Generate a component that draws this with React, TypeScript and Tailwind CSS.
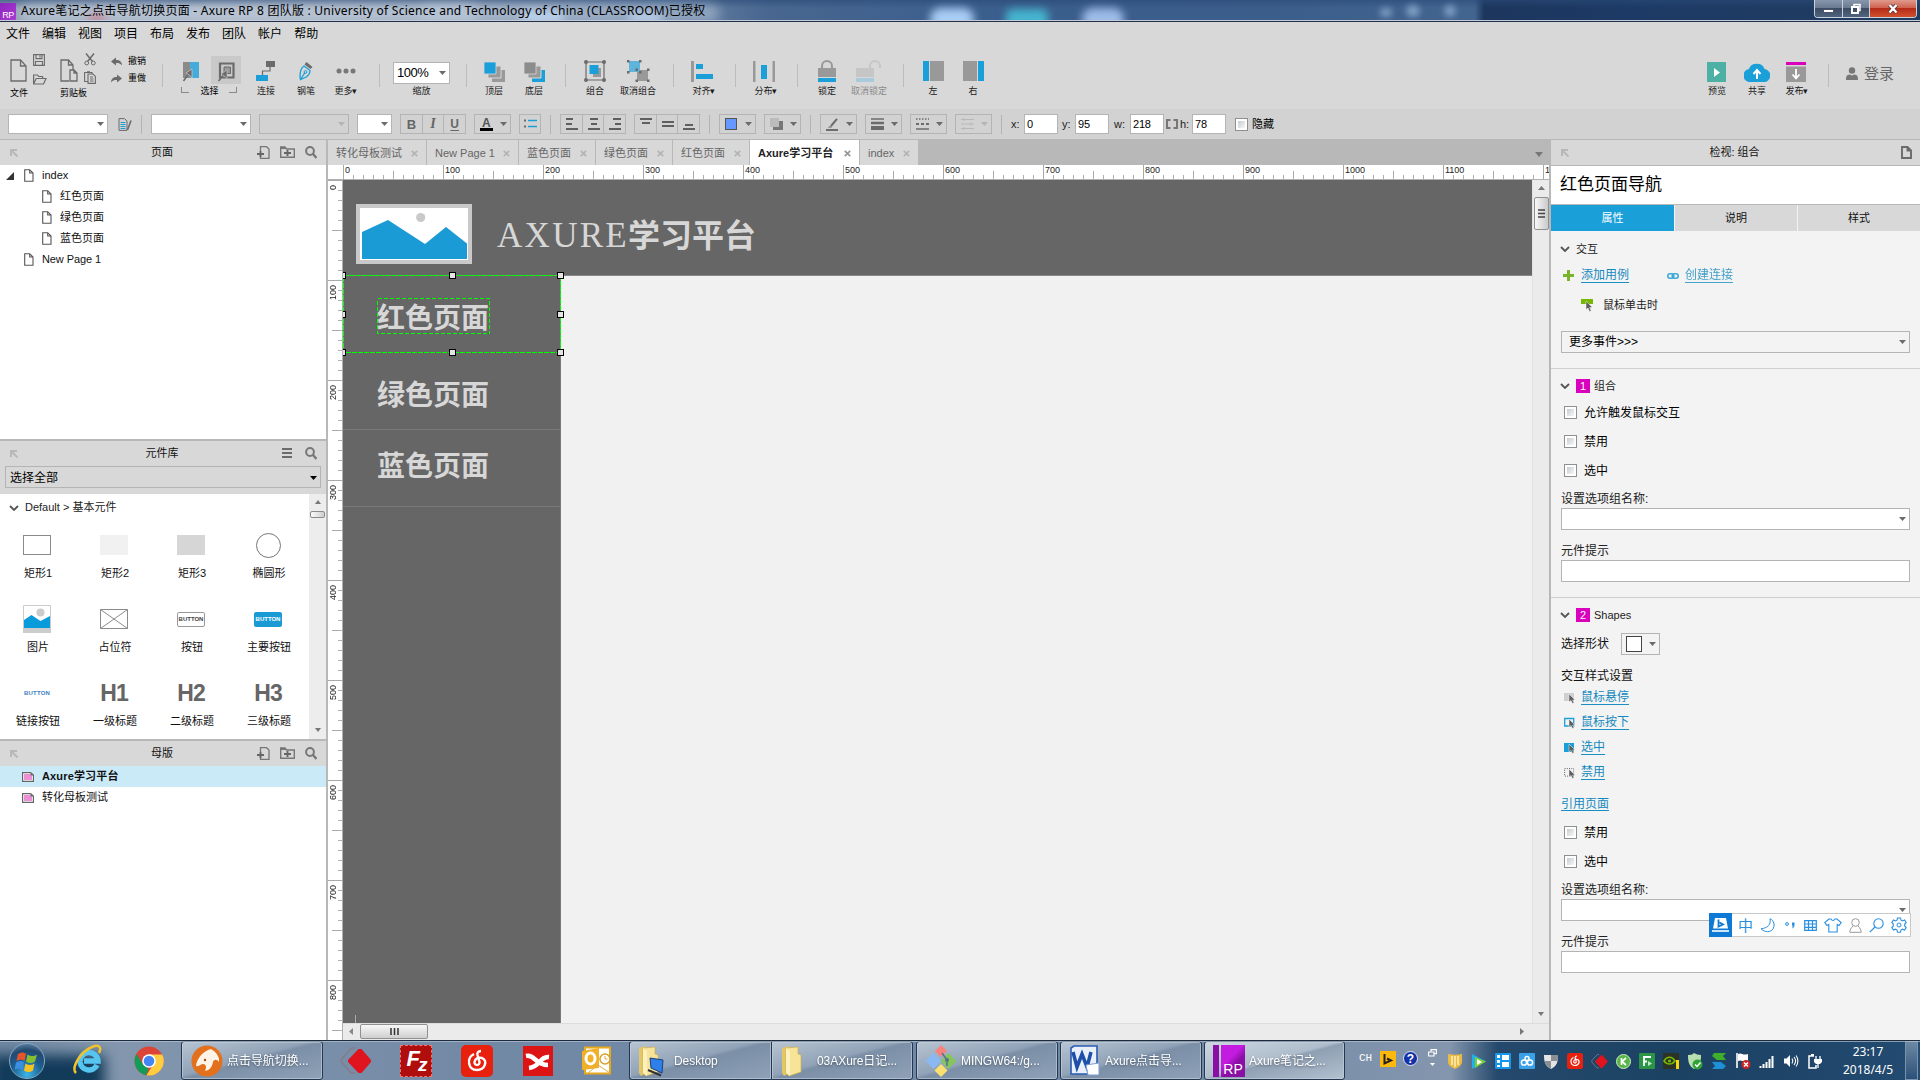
import React from "react";
import type { ReactNode } from "react";

type P = { children?: ReactNode; className?: string };

const G = "#6b6b6b";
const BLUE = "#1a9fd9";

function Svg({ w, h, children, className = "" }: { w: number; h: number; children: ReactNode; className?: string }) {
  return (
    <svg width={w} height={h} viewBox={`0 0 ${w} ${h}`} fill="none" className={`block shrink-0 ${className}`}>
      {children}
    </svg>
  );
}

const Caret = ({ c = "#6b6b6b" }: { c?: string }) => (
  <Svg w={7} h={4}><path d="M0 0h7L3.500 4z" fill={c} /></Svg>
);

/* ---------- window title ---------- */
function TitleBar() {
  return (
    <div className="relative flex h-[22px] items-center overflow-hidden border-b border-[#1f3048] bg-[linear-gradient(90deg,#8d9db2_0%,#9eacbf_12%,#8c9db5_25%,#6e87a8_34%,#48668f_40%,#3a5e8d_52%,#3b5d8a_66%,#42658f_76.8%,#1c365d_77.3%,#1d3a66_85%,#203c5f_100%)]">
      <div className="absolute inset-x-0 top-0 h-[8px] bg-[linear-gradient(180deg,#2a4a7799,#2a4a7700)]" />
      <div className="absolute left-[18px] top-[5px] h-[17px] w-[460px] rounded-full bg-[#cfd8e4]/60 blur-[6px]" />
      <div className="absolute left-[420px] top-[5px] h-[17px] w-[300px] rounded-full bg-[#b9c8da]/60 blur-[6px]" />
      <div className="absolute left-[88px] top-[14px] h-[10px] w-[18px] rounded-full bg-[#d26a7c]/60 blur-[4px]" />
      <div className="absolute left-[520px] top-[11px] h-[12px] w-[44px] rounded-full bg-[#c4dcf7]/80 blur-[4px]" />
      <div className="absolute left-[628px] top-[12px] h-[12px] w-[34px] rounded-full bg-[#c4dcf7]/70 blur-[4px]" />
      <div className="absolute left-[930px] top-[8px] h-[22px] w-[44px] rounded-full bg-[#a9cdf5] blur-[4px]" />
      <div className="absolute left-[1006px] top-[9px] h-[20px] w-[42px] rounded-md bg-[#45b5cf] blur-[4px]" />
      <div className="absolute left-[1082px] top-[8px] h-[22px] w-[42px] rounded-full bg-[#9dbce8] blur-[4px]" />
      <div className="absolute left-[1380px] top-[8px] h-[9px] w-[12px] rounded-full bg-[#7b9dc2] blur-[3px]" />
      <div className="absolute left-[1406px] top-[5px] h-[12px] w-[14px] rounded-full bg-[#7b9dc2] blur-[3px]" />
      <div className="absolute left-[1444px] top-[5px] h-[12px] w-[12px] rounded-full bg-[#7b9dc2] blur-[3px]" />
      <div className="absolute inset-x-0 bottom-0 h-px bg-[#c3ccd8]" />
      <div className="relative mt-[2px] flex h-[17px] w-4 items-end justify-center bg-[linear-gradient(135deg,#8e24c0,#a83bd0)] text-[9px] leading-[10px] tracking-[-0.5px] text-white">RP</div>
      <div className="relative ml-[5px] whitespace-nowrap font-['Noto_Sans','Noto_Sans_CJK_SC',sans-serif] text-[12px] leading-[20px] tracking-[0.25px] text-black">
        Axure笔记之点击导航切换页面 - Axure RP 8 团队版 : University of Science and Technology of China (CLASSROOM)已授权
      </div>
      <div className="relative ml-auto mr-[3px] flex h-[18px] w-[103px] self-start overflow-hidden rounded-b-[4px] border border-t-0 border-[#c9d2de]">
        <div className="flex w-[28px] items-center justify-center border-r border-[#c9d2de] bg-[linear-gradient(180deg,#8796ab_0%,#69798f_48%,#3c4c64_50%,#51647e_100%)] pt-[4px]">
          <div className="h-[4px] w-[11px] border border-[#4b5565] bg-white" />
        </div>
        <div className="flex w-[27px] items-center justify-center border-r border-[#c9d2de] bg-[linear-gradient(180deg,#8796ab_0%,#69798f_48%,#3c4c64_50%,#51647e_100%)]">
          <Svg w={12} h={12}><path d="M4 3.500V1.500h6v6H8.500" stroke="#fff" strokeWidth="1.500" /><rect x="2" y="4" width="6" height="6" stroke="#fff" strokeWidth="2" /></Svg>
        </div>
        <div className="flex flex-1 items-center justify-center bg-[linear-gradient(180deg,#e09a8c_0%,#cf6350_45%,#b52c18_50%,#d2502e_100%)]">
          <Svg w={12} h={11}><path d="M2.500 2l7 7.500M9.500 2l-7 7.500" stroke="#5a3430" strokeWidth="4" /><path d="M2.500 2l7 7.500M9.500 2l-7 7.500" stroke="#fff" strokeWidth="2.400" /></Svg>
        </div>
      </div>
    </div>
  );
}

function MenuBar() {
  return (
    <div className="flex h-[24px] items-center gap-[12px] bg-[#d8d8d8] pl-[6px] text-[12px] leading-none text-black">
      {["文件", "编辑", "视图", "项目", "布局", "发布", "团队", "帐户", "帮助"].map((m) => <span key={m}>{m}</span>)}
    </div>
  );
}

/* ---------- main toolbar ---------- */
const Tool = ({ icon, label, className = "", dim }: { icon: ReactNode; label: string; className?: string; dim?: boolean }) => (
  <div className={`flex h-[58px] shrink-0 flex-col items-center ${className}`}>
    <div className="mt-[7px] flex h-[28px] items-center justify-center">{icon}</div>
    <div className={`mt-[2px] flex items-center whitespace-nowrap text-[9px] leading-[9px] ${dim ? "text-[#8a8a8a]" : "text-[#1a1a1a]"}`}>{label}</div>
  </div>
);
const Sep = ({ className = "" }: P) => <div className={`mt-[14px] h-[23px] w-px shrink-0 bg-[#bcbcbc] ${className}`} />;

const Page = ({ w = 17, h = 23, c = "#6b6b6b" }: { w?: number; h?: number; c?: string }) => (
  <svg width={w} height={h} viewBox="0 0 17 23" fill="none" className="block shrink-0"><path d="M1 1h9.500L16 7v15H1zM10.500 1v6H16" stroke={c} strokeWidth="1.300" /></svg>
);

function Toolbar() {
  return (
    <div className="flex h-[63px] bg-[#d8d8d8] pt-[4px]">
      <div className="ml-[10px] flex h-[58px] w-[42px] flex-col">
        <div className="flex h-[36px] gap-[6px]">
          <div className="mt-[9px]"><Page /></div>
          <div className="mt-[4px] flex flex-col gap-[8px]">
            <Svg w={12} h={12}><path d="M.6.6h10.800v10.800H.6zM3 .6v4h6v-4M2.500 11V7.500h7V11M7 1.500v2" stroke={G} strokeWidth="1.100" /></Svg>
            <Svg w={14} h={11}><path d="M.6 10V1h4l1 1.500h4V4.500M.6 10l2.600-5.500H13L10.500 10z" stroke={G} strokeWidth="1.200" /></Svg>
          </div>
        </div>
        <div className="mt-[2px] flex-none pt-[1px] text-[9px] leading-[9px]">文件</div>
      </div>
      <div className="ml-[8px] flex h-[58px] w-[42px] flex-col">
        <div className="flex h-[36px] gap-[6px]">
          <div className="mt-[9px]"><Svg w={18} h={23}><path d="M9 22H1V1h7.500L13 6v5M8.500 1v5H13M10 11h4l3 3v8h-7zM14 11v3h3" stroke={G} strokeWidth="1.300" /></Svg></div>
          <div className="mt-[3px] flex flex-col gap-[5px]">
            <Svg w={12} h={13}><path d="M2 .5l6.500 8M10 .5L3.500 8.500" stroke={G} strokeWidth="1.500" /><circle cx="2.700" cy="10" r="1.900" stroke={G} /><circle cx="9.300" cy="10" r="1.900" stroke={G} /></Svg>
            <Svg w={12} h={13}><path d="M4 10.500H.6V1.500H8V3M3 .7h3M4 3h5l2.400 2.400v7H4zM6 6h3M6 8h3.500M6 10h3.500" stroke={G} strokeWidth="1.100" /></Svg>
          </div>
        </div>
        <div className="mt-[2px] flex-none pt-[1px] text-[9px] leading-[9px]">剪贴板</div>
      </div>
      <div className="ml-[9px] mt-[7px] flex h-[31px] w-[37px] flex-col justify-between text-[9px] leading-[9px]">
        <div className="flex h-[9px] items-center gap-[6px]"><Svg w={11} h={9}><path d="M0 4.500L5 .5V3c4 0 6 2 6 5.500C9.500 6.500 8 6 5 6v2.500z" fill={G} /></Svg>撤销</div>
        <div className="mb-[5px] flex h-[9px] items-center gap-[6px]"><Svg w={11} h={9}><path d="M11 4.500L6 .5V3C2 3 0 5 0 8.500 1.500 6.500 3 6 6 6v2.500z" fill={G} /></Svg>重做</div>
      </div>
      <Sep className="ml-[14px]" />
      <div className="ml-[18px] flex h-[58px] w-[60px] flex-col">
        <div className="mt-[6px] flex h-[28px] items-center justify-between">
          <Svg w={18} h={20} className="ml-[1px] mt-[4px]"><path d="M1 0h7v16H1z" fill="#8a8a8a" /><path d="M8 0h9v16H8z" fill="#46abd8" /><path d="M1.500 19l5-7" stroke={G} strokeWidth="1.500" /><path d="M10 7v9L8 13.500 4 11z" fill={G} stroke="#d8d8d8" strokeWidth=".6" /></Svg>
          <div className="flex h-[28px] w-[30px] items-center justify-center bg-[#c9c9c9] pt-[4px]">
            <Svg w={19} h={20}><path d="M3 1.500h13.500v14H3z" stroke={G} strokeWidth="2.200" /><path d="M7 5h6.500v6.500H7z" fill="#999" stroke={G} strokeWidth="1" /><path d="M1.500 19l5-6" stroke={G} strokeWidth="1.600" /><path d="M10 8v9L8 14.500 4 12z" fill={G} stroke="#c9c9c9" strokeWidth=".6" /></Svg>
          </div>
        </div>
        <div className="flex h-[12px] items-end justify-between pr-[4px] text-[9px] leading-[9px]">
          <div className="mb-[3px] h-[6px] w-[8px] border-b border-l border-[#8a8a8a]" />
          <span className="-mr-[1px]">选择</span>
          <div className="mb-[3px] h-[6px] w-[8px] border-b border-r border-[#8a8a8a]" />
        </div>
      </div>
      <Tool className="ml-[12px] w-[26px]" label="连接" icon={<Svg w={20} h={20}><path d="M10 0h9v6h-9zM0 14h12v6H0z" fill={G} /><path d="M0 14h12v6H0z" fill={BLUE} /><path d="M14 6v4H6.500v4" stroke={G} strokeWidth="1.200" /></Svg>} />
      <Tool className="ml-[14px] w-[26px]" label="钢笔" icon={<Svg w={15} h={20}><path d="M7.500 1l6 5-2 2-6-4.500z" fill={G} /><path d="M5 5l6 4.500c0 4-2 6-6 7.500L1.500 18.500 1 16C1 11 1.500 7 5 5zM1.500 18.500l4.500-7" stroke={BLUE} strokeWidth="1.300" /><circle cx="6.500" cy="11" r="1.400" stroke={BLUE} /></Svg>} />
      <Tool className="ml-[13px] w-[28px]" label="更多▾" icon={<Svg w={20} h={6}><circle cx="3" cy="3" r="2.500" fill="#777" /><circle cx="10" cy="3" r="2.500" fill="#777" /><circle cx="17" cy="3" r="2.500" fill="#777" /></Svg>} />
      <Sep className="ml-[19px]" />
      <Tool className="ml-[13px] w-[57px]" label="缩放" icon={
        <div className="mt-[3px] flex h-[22px] w-[57px] items-center justify-between border border-[#b4b4b4] bg-white px-[3px] text-[13px] leading-none tracking-[-0.5px]">100%<Caret /></div>
      } />
      <Sep className="ml-[16px]" />
      <Tool className="ml-[13px] w-[28px]" label="顶层" icon={<Svg w={21} h={20} className="mt-px"><path d="M8 8h13v12H8z" fill="#999" /><path d="M4 4h13v12H4z" fill="#999" stroke="#d8d8d8" /><path d="M0 0h12v12H0z" fill={BLUE} stroke="#d8d8d8" strokeWidth=".8" /></Svg>} />
      <Tool className="ml-[12px] w-[28px]" label="底层" icon={<Svg w={21} h={20} className="mt-px"><path d="M8 8h13v12H8z" fill={BLUE} /><path d="M4 4h13v12H4z" fill="#999" stroke="#d8d8d8" /><path d="M0 0h12v12H0z" fill="#8c8c8c" stroke="#d8d8d8" strokeWidth=".8" /></Svg>} />
      <Sep className="ml-[17px]" />
      <Tool className="ml-[15px] w-[28px]" label="组合" icon={<Svg w={22} h={22}><path d="M2 2h18v18H2z" stroke={G} strokeWidth="1.200" /><path d="M9 8h8v9H9z" fill="#999" /><path d="M5.500 5h9v9h-9z" fill={BLUE} /><g fill={G}><circle cx="2" cy="2" r="2" /><circle cx="20" cy="2" r="2" /><circle cx="2" cy="20" r="2" /><circle cx="20" cy="20" r="2" /></g></Svg>} />
      <Tool className="ml-[10px] w-[38px]" label="取消组合" icon={<Svg w={23} h={22}><path d="M10 10h11v11H10z" fill="#999" /><path d="M2 1h11v11H2z" fill="#5fb4db" /><g fill={G}><path d="M0 0h2.500v2.500H0zM12 0h2.500v2.500H12zM0 11h2.500v2.500H0zM12 11h2.500v2.500H12zM8.500 8.500H11V11H8.500zM20 8.500h2.500V11H20zM8.500 19.500H11V22H8.500zM20 19.500h2.500V22H20z" /></g></Svg>} />
      <Sep className="ml-[16px]" />
      <Tool className="ml-[16px] w-[28px]" label="对齐▾" icon={<Svg w={22} h={21} className="-ml-[5px]"><path d="M0 0h3v21H0z" fill="#999" /><path d="M5 3h7v5H5zM5 13h17v5H5z" fill={BLUE} /></Svg>} />
      <Sep className="ml-[17px]" />
      <Tool className="ml-[16px] w-[28px]" label="分布▾" icon={<Svg w={22} h={21} className="-ml-[4px]"><path d="M0 0h2.500v21H0zM19.500 0H22v21h-2.500z" fill="#999" /><path d="M8 4h6v14H8z" fill={BLUE} /></Svg>} />
      <Sep className="ml-[17px]" />
      <Tool className="ml-[15px] w-[28px]" label="锁定" icon={<Svg w={18} h={22}><path d="M4 9V6a5 5 0 0110 0v3" stroke="#999" strokeWidth="2" /><path d="M0 8h18v9H0z" fill="#999" /><path d="M0 18h18v4H0z" fill={BLUE} /></Svg>} />
      <Tool dim className="ml-[9px] w-[38px]" label="取消锁定" icon={<Svg w={26} h={22}><path d="M14 9V6a5 5 0 0110 0v2" stroke="#c6c6c6" strokeWidth="2" /><path d="M0 8h18v9H0z" fill="#c6c6c6" /><path d="M0 18h18v4H0z" fill="#a9cbdb" /></Svg>} />
      <Sep className="ml-[15px]" />
      <Tool className="ml-[15px] w-[28px]" label="左" icon={<Svg w={21} h={20}><path d="M0 0h6v20H0z" fill={BLUE} /><path d="M7 0h14v20H7z" fill="#999" /></Svg>} />
      <Tool className="ml-[12px] w-[28px]" label="右" icon={<Svg w={21} h={20}><path d="M15 0h6v20h-6z" fill={BLUE} /><path d="M0 0h14v20H0z" fill="#999" /></Svg>} />
      <Tool className="ml-auto w-[28px]" label="预览" icon={<Svg w={19} h={20} className="mt-[2px]"><path d="M0 0h19v20H0z" fill="#4db0a5" /><path d="M7 6l6 4.500L7 15z" fill="#fff" /></Svg>} />
      <Tool className="ml-[12px] w-[28px]" label="共享" icon={<Svg w={26} h={20} className="mt-[2px]"><path d="M7 20a6.500 6.500 0 01-2-13 8 7 0 0115.500 0A6.500 6.500 0 0119 20z" fill={BLUE} /><path d="M13 17V9M9.500 12L13 8l3.500 4" stroke="#fff" strokeWidth="2" /></Svg>} />
      <Tool className="ml-[12px] w-[28px]" label="发布▾" icon={<Svg w={20} h={20} className="mt-[2px] -ml-[2px]"><path d="M0 0h20v3H0z" fill="#d900be" /><path d="M0 4.500h20V20H0z" fill="#999" /><path d="M10 7v9M6.500 12.500L10 16.500l3.500-4" stroke="#fff" strokeWidth="1.800" /></Svg>} />
      <Sep className="ml-[17px]" />
      <div className="ml-[17px] mr-[26px] mt-[15px] flex h-[16px] items-center gap-[6px] text-[15px] leading-none text-[#666]">
        <Svg w={12} h={13}><circle cx="6" cy="3.500" r="3.200" fill="#777" /><path d="M0 13c0-4.500 1-5 3.500-5.500L6 8.500l2.500-1C11 8 12 8.500 12 13z" fill="#777" /></Svg>登录
      </div>
    </div>
  );
}

/* ---------- style bar ---------- */
const Drop = ({ className = "", off }: { className?: string; off?: boolean }) => (
  <div className={`flex h-[20px] shrink-0 items-center justify-end border border-[#b4b4b4] pr-[3px] ${off ? "bg-[#d2d2d2]" : "bg-white"} ${className}`}><Caret c={off ? "#b4b4b4" : "#6b6b6b"} /></div>
);
const Trio = ({ items, className = "" }: { items: ReactNode[]; className?: string }) => (
  <div className={`flex h-[20px] w-[66px] shrink-0 divide-x divide-[#b4b4b4] border border-[#b4b4b4] ${className}`}>
    {items.map((n, i) => <div key={i} className="flex flex-1 items-center justify-center text-[#666]">{n}</div>)}
  </div>
);
const Pick = ({ children, className = "", off }: P & { off?: boolean }) => (
  <div className={`flex h-[20px] w-[37px] shrink-0 items-center justify-between border border-[#b4b4b4] pl-[5px] pr-[3px] ${className}`}>{children}<Caret c={off ? "#b4b4b4" : "#6b6b6b"} /></div>
);
const VSep = ({ className = "" }: P) => <div className={`h-[19px] w-px shrink-0 bg-[#b4b4b4] ${className}`} />;
const Num = ({ label, value, className = "" }: { label: ReactNode; value: string; className?: string }) => (
  <div className={`flex shrink-0 items-center justify-between text-[11px] text-[#222] ${className}`}>
    {label}
    <div className="flex h-[20px] w-[34px] items-center border border-[#b4b4b4] bg-white pl-[2px] tracking-[-0.2px] text-black">{value}</div>
  </div>
);
const CheckBox = () => (
  <div className="h-[13px] w-[13px] shrink-0 border border-[#8e8f8f] bg-white p-[2px]"><div className="h-full w-full bg-[linear-gradient(135deg,#c6ccd2,#f6f6f6)]" /></div>
);
const lines = (d: string) => <Svg w={13} h={12}><path d={d} stroke="#5f5f5f" strokeWidth="2" /></Svg>;

function StyleBar() {
  return (
    <div className="flex h-[31px] items-center border-b border-[#b8b8b8] bg-[#d2d2d2] leading-none">
      <Drop className="ml-[8px] w-[100px]" />
      <Svg w={14} h={13} className="ml-[10px]"><path d="M1 .6h5.500L9 3v9.400H1z" stroke={G} /><path d="M2.500 4.500h5M2.500 6.500h5M2.500 8.500h5M2.500 10.500h5" stroke={BLUE} /><path d="M13 2.500L9.500 12" stroke={G} strokeWidth="1.600" /></Svg>
      <VSep className="ml-[9px]" />
      <Drop className="ml-[9px] w-[100px]" />
      <Drop off className="ml-[8px] w-[90px]" />
      <Drop className="ml-[8px] w-[35px]" />
      <Trio className="ml-[8px]" items={[
        <span className="text-[13px] font-bold">B</span>,
        <span className="font-['Liberation_Serif',serif] text-[14px] font-bold italic">I</span>,
        <span className="text-[12px] font-bold underline underline-offset-2">U</span>]} />
      <Pick className="ml-[8px]"><span className="mt-px border-b-[3px] border-black px-[2px] text-[12px] font-bold leading-[10px] text-[#555]">A</span></Pick>
      <div className="ml-[8px] flex h-[20px] w-[22px] items-center justify-center border border-[#b4b4b4]"><Svg w={13} h={10}><path d="M0 1.500h2M0 7.500h2" stroke={G} strokeWidth="2" /><path d="M4 1.500h9M4 7.500h9" stroke={BLUE} strokeWidth="1.500" /></Svg></div>
      <VSep className="ml-[9px]" />
      <Trio className="ml-[9px]" items={[lines("M1 1h7M1 6h6M1 11h12"), lines("M3 1h8M4 6h6M1 11h12"), lines("M5 1h8M7 6h6M1 11h12")]} />
      <Trio className="ml-[8px]" items={[lines("M1 1h12M3 5h8"), lines("M1 4h12M1 8h12"), lines("M3 7h8M1 11h12")]} />
      <VSep className="ml-[9px]" />
      <Pick className="ml-[9px]"><div className="h-[12px] w-[12px] border border-[#555] bg-[#6699ff]" /></Pick>
      <Pick className="ml-[8px]"><Svg w={13} h={12}><path d="M3 3h10v9H3z" fill="#777" /><path d="M0 0h9v9H0z" fill="#bbb" /></Svg></Pick>
      <VSep className="ml-[9px]" />
      <Pick className="ml-[9px]"><Svg w={13} h={13}><path d="M11 .8L5 8" stroke={G} strokeWidth="2" /><path d="M2 9l3-1 1 1.500H2z" fill={G} /><path d="M0 12h12" stroke="#555" strokeWidth="1.600" /></Svg></Pick>
      <Pick className="ml-[8px]"><Svg w={13} h={12}><path d="M0 1h13" stroke={G} strokeWidth="1.500" /><path d="M0 5h13" stroke={G} strokeWidth="2.500" /><path d="M0 10h13" stroke={G} strokeWidth="4" /></Svg></Pick>
      <Pick className="ml-[8px]"><Svg w={13} h={12}><path d="M0 1h13" stroke={G} strokeWidth="1.500" strokeDasharray="1.500 1.500" /><path d="M0 6h13" stroke={G} strokeWidth="1.800" strokeDasharray="3 2" /><path d="M0 11h13" stroke={G} strokeWidth="1.500" /></Svg></Pick>
      <Pick off className="ml-[8px]"><Svg w={13} h={12}><path d="M0 1.500h13M0 6h13M0 10.500h13M3 0v3M10 4.500v3M3 9v3" stroke="#b8b8b8" /></Svg></Pick>
      <VSep className="ml-[9px]" />
      <Num className="ml-[9px] w-[47px]" label="x:" value="0" />
      <Num className="ml-[4px] w-[47px]" label="y:" value="95" />
      <Num className="ml-[5px] w-[50px]" label="w:" value="218" />
      <Num className="ml-[2px] w-[60px]" label={<span className="flex items-center"><Svg w={12} h={10}><path d="M4.500 1H1v8h3.500M7.500 1H11v8H7.500" stroke="#777" strokeWidth="2" /></Svg><span className="ml-[2px]">h:</span></span>} value="78" />
      <div className="ml-[9px] flex items-center gap-[4px] pt-px text-[11px] text-black"><CheckBox />隐藏</div>
    </div>
  );
}

/* ---------- panels ---------- */
const Pop = () => <Svg w={8} h={8}><path d="M1 7V1h6M1 1l6.500 6.500" stroke="#b8b8b8" strokeWidth="2" /></Svg>;
const Mag = () => <Svg w={12} h={13}><circle cx="5" cy="5" r="3.900" stroke="#777" strokeWidth="2" /><path d="M8 8l3.500 4" stroke="#777" strokeWidth="2.400" /></Svg>;
const AddIcons = () => (
  <>
    <Svg w={13} h={13}><path d="M3.500 5V.7h6L12 3v9.300H3.500V10.500" stroke="#777" strokeWidth="1.300" /><path d="M0 8h7M3.500 5v6" stroke="#666" strokeWidth="1.900" /></Svg>
    <Svg w={15} h={12} className="ml-[10px] mr-[10px]"><path d="M.7 11.300V1H5l1.500 2h7.800v8.300z" stroke="#777" strokeWidth="1.400" /><path d="M1 1h4l1 2H1z" fill="#777" /><path d="M4 7h7M7.500 4v6" stroke="#666" strokeWidth="1.900" /></Svg>
  </>
);
const PanelHead = ({ title, children }: { title: string; children: ReactNode }) => (
  <div className="flex h-[25px] shrink-0 items-center bg-[#d8d8d8] pl-[10px] pr-[9px] text-[11px] leading-none text-[#111]">
    <div className="w-[63px]"><Pop /></div>
    <div className="flex-1 text-center">{title}</div>
    <div className="flex w-[66px] items-center justify-end pb-px">{children}</div>
  </div>
);
const TreeRow = ({ name, depth }: { name: string; depth: string }) => (
  <div className={`flex h-[21px] items-center text-[11px] leading-none text-[#111] ${depth}`}>
    {name === "index" && <Svg w={9} h={8} className="mr-[9px]"><path d="M8 0v8H0z" fill="#333" /></Svg>}
    <Svg w={10} h={13}><path d="M.7.7h5L9 4v8.300H.7zM5.700.7V4H9" stroke="#555" strokeWidth="1.100" /></Svg>
    <span className={name === "New Page 1" ? "ml-[8px] tracking-[-0.1px]" : "ml-[8px]"}>{name}</span>
  </div>
);
const Chev = () => <Svg w={10} h={6}><path d="M1 1l4 4 4-4" stroke="#555" strokeWidth="1.800" /></Svg>;

const widgets: [string, ReactNode][] = [
  ["矩形1", <div className="h-[20px] w-[28px] border border-[#8a8a8a] bg-white" />],
  ["矩形2", <div className="h-[20px] w-[28px] bg-[#f1f1f1]" />],
  ["矩形3", <div className="h-[20px] w-[28px] bg-[#d6d6d6]" />],
  ["椭圆形", <div className="h-[25px] w-[25px] rounded-full border border-[#777] bg-white" />],
  ["图片", <Svg w={28} h={28}><path d="M.5.5h27v27H.5z" fill="#fff" stroke="#ccc" /><path d="M1 15l7.500-5 9 6 9.500-5v13H1z" fill="#0a9bdb" /><path d="M0 23h28v5H0z" fill="#ccc" /><circle cx="17.500" cy="7.500" r="4" fill="#ccc" /></Svg>],
  ["占位符", <Svg w={28} h={20}><path d="M.5.5h27v19H.5zM.5.5l27 19M27.500.5L.5 19.500" stroke="#8a8a8a" /></Svg>],
  ["按钮", <div className="flex h-[15px] w-[28px] items-center justify-center rounded-[2px] border border-[#999] text-[6px] font-bold leading-none text-[#444]">BUTTON</div>],
  ["主要按钮", <div className="flex h-[15px] w-[28px] items-center justify-center rounded-[2px] bg-[#1a9bd6] text-[6px] font-bold leading-none text-white">BUTTON</div>],
  ["链接按钮", <div className="text-[6px] font-bold leading-none tracking-[0.2px] text-[#3a7fc4]">BUTTON</div>],
  ["一级标题", <div className="text-[23px] font-bold leading-none tracking-[-1px] text-[#666]">H1</div>],
  ["二级标题", <div className="text-[23px] font-bold leading-none tracking-[-1px] text-[#666]">H2</div>],
  ["三级标题", <div className="text-[23px] font-bold leading-none tracking-[-1px] text-[#666]">H3</div>],
];

const MasterIcon = () => <Svg w={12} h={10}><path d="M.6.6h8L11.400 3v6.400H.6z" fill="#fff" stroke="#666" strokeWidth="1.200" /><path d="M2 2h6l2 2v4H2z" fill="#ec8fd6" /><path d="M8.500.6v3h3z" fill="#666" /></Svg>;

function LeftPanels() {
  return (
    <div className="flex w-[328px] shrink-0 flex-col border-r-2 border-[#b8b8b8] bg-white">
      <PanelHead title="页面"><AddIcons /><Mag /></PanelHead>
      <div className="h-[274px]">
        <TreeRow name="index" depth="pl-[6px]" />
        <TreeRow name="红色页面" depth="pl-[42px]" />
        <TreeRow name="绿色页面" depth="pl-[42px]" />
        <TreeRow name="蓝色页面" depth="pl-[42px]" />
        <TreeRow name="New Page 1" depth="pl-[24px]" />
      </div>
      <div className="h-[55px] border-t-2 border-[#b8b8b8] bg-[#d8d8d8]">
        <PanelHead title="元件库"><Svg w={10} h={10} className="mr-[13px]"><path d="M0 1h10M0 5h10M0 9h10" stroke="#6b6b6b" strokeWidth="2" /></Svg><Mag /></PanelHead>
        <div className="mx-[5px] flex h-[22px] items-center justify-between border border-[#b4b4b4] pl-[4px] pr-[3px] pt-[2px] text-[12px] leading-none text-black">选择全部<Caret c="#000" /></div>
      </div>
      <div className="flex h-[245px]">
        <div className="w-[309px]">
          <div className="flex h-[27px] items-center gap-[6px] pl-[9px] text-[11px] leading-none text-[#222]"><Chev />Default &gt; 基本元件</div>
          <div className="grid grid-cols-[77px_77px_77px_77px]">
            {widgets.map(([n, ic]) => (
              <div key={n} className="flex h-[74px] flex-col items-center text-[11px] leading-none text-[#111]">
                <div className="flex h-[48px] items-center justify-center pr-[3px]">{ic}</div>
                <div className="-mt-px pr-px">{n}</div>
              </div>
            ))}
          </div>
        </div>
        <div className="flex flex-1 flex-col items-center bg-[#ededed] pb-[7px] pt-[6px]">
          <Svg w={6} h={4}><path d="M0 4h6L3 0z" fill="#777" /></Svg>
          <div className="mt-[7px] h-[7px] w-[15px] rounded-[2px] border border-[#8a8a8a] bg-[linear-gradient(90deg,#fafafa,#cfcfcf)]" />
          <div className="mt-auto"><Svg w={6} h={4}><path d="M0 0h6L3 4z" fill="#777" /></Svg></div>
        </div>
      </div>
      <div className="border-t-2 border-[#b8b8b8]"><PanelHead title="母版"><AddIcons /><Mag /></PanelHead></div>
      <div className="flex h-[21px] items-center gap-[8px] bg-[#cbeaf8] pl-[22px] text-[11px] font-bold leading-none tracking-[0.15px] text-[#111]"><MasterIcon />Axure学习平台</div>
      <div className="flex h-[21px] items-center gap-[8px] pl-[22px] text-[11px] leading-none text-[#111]"><MasterIcon />转化母板测试</div>
    </div>
  );
}

/* ---------- canvas ---------- */
const Tab = ({ name, className, active }: { name: string; className: string; active?: boolean }) => (
  <div className={`flex h-[25px] shrink-0 items-center justify-between border-r border-[#b8b8b8] pl-[8px] pr-[8px] pt-[1px] text-[11px] leading-none ${active ? "bg-white font-bold text-[#222]" : "bg-[#d8d8d8] text-[#666]"} ${className}`}>
    {name}
    <Svg w={7} h={7}><path d="M.8.8l5.400 5.400M6.200.8L.8 6.200" stroke={active ? "#999" : "#b5b5b5"} strokeWidth="1.800" /></Svg>
  </div>
);

const Nav = ({ name, className }: { name: string; className: string }) => (
  <div className={`flex items-center pl-[34px] text-[28px] font-bold leading-none text-[#d7d7d7] ${className}`}>{name}</div>
);
const Handle = ({ className }: { className: string }) => <div className={`absolute h-[7px] w-[7px] border border-black bg-[#e4e4e4] ${className}`} />;

function Canvas() {
  return (
    <div className="flex w-[1221px] shrink-0 flex-col bg-white">
      <div className="flex h-[25px] bg-[#b8b8b8]">
        <Tab name="转化母板测试" className="w-[99px]" />
        <Tab name="New Page 1" className="w-[92px]" />
        <Tab name="蓝色页面" className="w-[77px]" />
        <Tab name="绿色页面" className="w-[77px]" />
        <Tab name="红色页面" className="w-[77px]" />
        <Tab active name="Axure学习平台" className="w-[110px]" />
        <Tab name="index" className="w-[59px]" />
        <div className="ml-auto mr-[6px] mt-[12px]"><Svg w={8} h={5}><path d="M0 0h8L4 5z" fill="#777" /></Svg></div>
      </div>
      <div className="flex h-[15px] overflow-hidden border-b border-[#b0b0b0] pl-[15px]">
        {Array.from({ length: 13 }, (_, i) => (
          <div key={i} className="flex h-[14px] w-[100px] shrink-0 flex-col justify-between border-l border-[#a8a8a8]">
            <div className="flex h-[10px] items-end">
              <span className="w-[49px] pl-[1px] text-[9px] leading-[9px] text-[#222]">{i === 12 ? 1 : i * 100}</span>
              <div className={i === 12 ? "hidden" : "h-[4px] w-px bg-[#a8a8a8]"} />
            </div>
            <div className="h-[4px] bg-[repeating-linear-gradient(90deg,transparent_0_9px,#b0b0b0_9px_10px)]" />
          </div>
        ))}
      </div>
      <div className="flex min-h-0 flex-1">
        <div className="flex w-[15px] shrink-0 flex-col overflow-hidden border-r border-[#b0b0b0]">
          {Array.from({ length: 9 }, (_, i) => (
            <div key={i} className="flex h-[100px] shrink-0 justify-between border-t border-[#a8a8a8]">
              <div className="flex w-[10px] flex-col items-end">
                <span className="h-[49px] rotate-180 pb-[4px] text-right text-[9px] leading-[9px] text-[#222] [writing-mode:vertical-rl]">{i * 100}</span>
                <div className="h-px w-[6px] bg-[#a8a8a8]" />
              </div>
              <div className="w-[4px] bg-[repeating-linear-gradient(180deg,transparent_0_9px,#b0b0b0_9px_10px)]" />
            </div>
          ))}
        </div>
        <div className="flex min-w-0 flex-1 flex-col">
          <div className="flex h-[843px]">
            <div className="relative flex w-[1189px] flex-col overflow-hidden bg-[#f1f1f1]">
              <div className="flex h-[96px] items-start border-b border-[#888] bg-[#666]">
                <div className="ml-[13px] mt-[24px] h-[60px] w-[116px]">
                  <Svg w={116} h={60}><path d="M2 2h112v56H2z" fill="#fff" stroke="#c9c9c9" strokeWidth="4" /><path d="M6 28l26-12 37 24 21-17 21 16.500V55H6z" fill="#1a9bd6" /><circle cx="64.700" cy="13.500" r="4.600" fill="#c9c9c9" /></Svg>
                </div>
                <div className="ml-[25px] mt-[34px] flex h-[42px] items-center whitespace-nowrap leading-none text-[#d7d7d7]">
                  <span className="w-[131px] font-['Liberation_Serif',serif] text-[35px] tracking-[2.3px]">AXURE</span>
                  <span className="pt-px text-[32px] font-bold">学习平台</span>
                </div>
              </div>
              <div className="flex w-[218px] flex-1 flex-col border-r border-[#797979] bg-[#666]">
                <Nav name="红色页面" className="h-[78px] pt-[7px]" />
                <Nav name="绿色页面" className="h-[76px] border-b border-[#797979] pt-[8px]" />
                <Nav name="蓝色页面" className="h-[77px] border-b border-[#797979] pb-[2px]" />
                <div className="ml-[12px] mt-auto h-[8px] w-px bg-[#aaa]" />
              </div>
              <div className="absolute left-0 top-[95px] h-[78px] w-[218px]">
                <svg width="218" height="78" viewBox="0 0 218 78" fill="none" className="block" shapeRendering="crispEdges">
                  <rect x=".5" y=".5" width="217" height="77" stroke="#00ff00" strokeDasharray="5 1" />
                  <rect x="34.500" y="23.500" width="112" height="35" stroke="#00ff00" strokeDasharray="4 2" />
                </svg>
                <Handle className="-left-[4px] -top-[3px]" />
                <Handle className="left-[106px] -top-[3px]" />
                <Handle className="-right-[3px] -top-[3px]" />
                <Handle className="-left-[4px] top-[36px]" />
                <Handle className="-right-[3px] top-[36px]" />
                <Handle className="-left-[4px] -bottom-[3px]" />
                <Handle className="-bottom-[3px] left-[106px]" />
                <Handle className="-bottom-[3px] -right-[3px]" />
              </div>
            </div>
            <div className="flex flex-1 flex-col items-center border-l border-[#e2e2e2] bg-[#ebebeb] pt-[6px]">
              <Svg w={7} h={4}><path d="M0 4h7L3.500 0z" fill="#777" /></Svg>
              <div className="mt-[7px] flex h-[33px] w-[15px] items-center justify-center rounded-[2px] border border-[#909090] bg-[linear-gradient(90deg,#f8f8f8,#c9c9c9)]"><Svg w={7} h={9}><path d="M0 1h7M0 4.500h7M0 8h7" stroke="#444" strokeWidth="1.500" /></Svg></div>
              <div className="mb-[7px] mt-auto"><Svg w={6} h={4}><path d="M0 0h6L3 4z" fill="#777" /></Svg></div>
            </div>
          </div>
          <div className="flex h-[17px] items-center border-t border-[#dcdcdc] bg-[#ebebeb] pb-px pl-[6px]">
            <Svg w={4} h={7}><path d="M4 0v7L0 3.500z" fill="#888" /></Svg>
            <div className="ml-[7px] flex h-[15px] w-[68px] items-center justify-center rounded-[2px] border border-[#909090] bg-[linear-gradient(180deg,#f8f8f8,#cfcfcf)]"><Svg w={9} h={7}><path d="M1 0v7M4.500 0v7M8 0v7" stroke="#333" strokeWidth="1.500" /></Svg></div>
            <Svg w={4} h={7} className="ml-auto mr-[25px]"><path d="M0 0v7l4-3.500z" fill="#777" /></Svg>
          </div>
        </div>
      </div>
    </div>
  );
}

/* ---------- inspector ---------- */
const Check = ({ name, className = "" }: { name: string; className?: string }) => (
  <div className={`flex h-[13px] items-center gap-[7px] pl-[3px] text-[12px] leading-none text-black ${className}`}><CheckBox />{name}</div>
);
const Field = ({ className = "", children }: P) => (
  <div className={`flex h-[22px] w-[349px] items-center border border-[#b4b4b4] pr-[3px] text-[12px] leading-none ${className}`}>{children}</div>
);
const Cursor = ({ d }: { d: ReactNode }) => (
  <Svg w={12} h={12}>{d}<path d="M5 2v8l2-1.500 1.500 3 1.500-.8L8.700 8H11z" fill="#5f5f5f" stroke="#f3f3f3" strokeWidth=".5" /></Svg>
);
const LinkText = ({ children, className = "" }: P) => <span className={`border-b border-[#1a8fc1] text-[12px] leading-[13px] text-[#1389bd] ${className}`}>{children}</span>;
const Head = ({ n, name }: { n?: string; name: string }) => (
  <div className="flex h-[14px] items-center text-[11px] leading-none text-[#222]">
    <Chev />
    {n && <span className="ml-[6px] flex h-[14px] w-[14px] items-center justify-center bg-[#d900be] text-[11px] text-white">{n}</span>}
    <span className={n ? "ml-[4px]" : "ml-[6px]"}>{name}</span>
  </div>
);

function ImeBar() {
  const c = "#2b8fe0";
  return (
    <div className="absolute left-[158px] top-[773px] flex h-[24px] w-[202px] items-center border border-[#c8c8c8] bg-white">
      <div className="-my-px -ml-px flex h-[24px] w-[23px] items-center justify-center bg-[#0f7ad6]"><Svg w={17} h={16}><path d="M3 1h11l2 10.500H1z" fill="#fff" /><path d="M0 14h17" stroke="#fff" strokeWidth="1.600" /><path d="M6.500 2.500v7l4.500-2-3.500-2" stroke="#0f7ad6" strokeWidth="1.800" /></Svg></div>
      <div className="flex flex-1 items-center justify-between pl-[6px] pr-[3px] text-[15px] leading-none text-[#2b8fe0]">
        中
        <Svg w={15} h={15}><path d="M10 .8c1 6-2 9-9 10C6 16 15 14 14 6c-.5-3-2-4.500-4-5.200z" stroke={c} /></Svg>
        <Svg w={15} h={9}><circle cx="5" cy="3" r="1.400" stroke={c} /><path d="M10 1.500h2.500V4C12.500 6 11.500 7 10 7.500 11 6 10.700 5 10 4z" fill={c} /></Svg>
        <Svg w={13} h={11}><path d="M.7.7h11.600v9.600H.7zM.7 4h11.600M.7 7.300h11.600M4.500.7v9.600M8.500.7v9.600" stroke={c} strokeWidth="1.200" /></Svg>
        <Svg w={18} h={15}><path d="M5 1L.8 4.500 3 7.500l1.800-1V14h8.400V6.500l1.800 1 2.200-3L13 1h-2C10 3 8 3 7 1z" stroke={c} strokeWidth="1.100" /></Svg>
        <Svg w={13} h={15}><circle cx="6.500" cy="4.500" r="3.800" stroke="#999" /><path d="M4 8C2 10 .8 12 .8 14.300h11.400C12.200 12 11 10 9 8" stroke="#999" /></Svg>
        <Svg w={15} h={15}><circle cx="9.500" cy="5.500" r="4.700" stroke={c} strokeWidth="1.100" /><path d="M6 9L.8 14.200" stroke={c} strokeWidth="1.200" /></Svg>
        <Svg w={16} h={16}><path d="M6.500 1h3l.5 2.200 1.500.8 2-1 1.700 2.500L13.700 7v2l1.500 1.500L13.500 13l-2-.8-1.500.8-.5 2.200h-3L6 13l-1.500-.8-2 .8L.8 10.500 2.300 9V7L.8 5.500 2.500 3l2 1L6 3.200z" stroke={c} strokeWidth="1.100" /><circle cx="8" cy="8" r="2" stroke={c} /></Svg>
      </div>
    </div>
  );
}

function Inspector() {
  return (
    <div className="relative flex w-[371px] shrink-0 flex-col border-l-2 border-[#b8b8b8] bg-[#f3f3f3]">
      <div className="border-b border-[#b8b8b8]"><PanelHead title="检视: 组合"><Svg w={11} h={13} className="-mr-px"><path d="M1 1h5.500L10 4.500V12H1zM6.500 1v3.500H10" stroke="#6b6b6b" strokeWidth="1.900" /></Svg></PanelHead></div>
      <div className="flex h-[39px] items-center border-b border-[#b8b8b8] bg-white pb-[1px] pl-[9px] text-[17px] leading-none text-black">红色页面导航</div>
      <div className="grid h-[26px] grid-cols-[123px_122px_122px] gap-px text-[11px] leading-none text-[#111]">
        <div className="flex items-center justify-center bg-[#1a9fd9] text-white">属性</div>
        <div className="flex items-center justify-center bg-[#d8d8d8]">说明</div>
        <div className="flex items-center justify-center bg-[#d8d8d8]">样式</div>
      </div>
      <div className="flex h-[138px] flex-col border-b border-[#cfcfcf] pl-[9px]">
        <div className="mt-[11px]"><Head name="交互" /></div>
        <div className="ml-[3px] mt-[13px] flex h-[13px] items-center">
          <Svg w={11} h={11}><path d="M5.500 0v11M0 5.500h11" stroke="#78b52a" strokeWidth="3" /></Svg>
          <LinkText className="ml-[7px]">添加用例</LinkText>
          <Svg w={12} h={6} className="ml-[38px]"><rect x=".8" y=".8" width="6" height="4.400" rx="2.200" stroke="#3fa9d6" strokeWidth="1.600" /><rect x="5.200" y=".8" width="6" height="4.400" rx="2.200" stroke="#3fa9d6" strokeWidth="1.600" /></Svg>
          <LinkText className="ml-[6px] opacity-80">创建连接</LinkText>
        </div>
        <div className="ml-[21px] mt-[16px] flex h-[14px] items-center gap-[10px] text-[11px] leading-none text-[#222]">
          <Svg w={12} h={13}><path d="M0 0h12v5H0z" fill="#76b900" /><path d="M5 2v8.500l2-1.500 1.500 3.500 1.700-.8L8.700 8.500H11.500z" fill="#5f5f5f" stroke="#f3f3f3" strokeWidth=".5" /></Svg>
          鼠标单击时
        </div>
        <Field className="ml-px mt-[19px] justify-between pl-[7px]">更多事件&gt;&gt;&gt;<Caret /></Field>
      </div>
      <div className="flex h-[229px] flex-col border-b border-[#cfcfcf] pl-[9px]">
        <div className="mt-[10px]"><Head n="1" name="组合" /></div>
        <Check className="ml-px mt-[13px]" name="允许触发鼠标交互" />
        <Check className="ml-px mt-[16px]" name="禁用" />
        <Check className="ml-px mt-[16px]" name="选中" />
        <div className="ml-px mt-[16px] text-[12px] leading-[12px] text-[#222]">设置选项组名称:</div>
        <Field className="ml-px mt-[3px] justify-end bg-white"><Caret /></Field>
        <div className="ml-px mt-[15px] text-[12px] leading-[12px] text-[#222]">元件提示</div>
        <Field className="ml-px mt-[3px] bg-white" />
      </div>
      <div className="flex flex-col pl-[9px]">
        <div className="mt-[10px]"><Head n="2" name="Shapes" /></div>
        <div className="ml-px mt-[11px] flex h-[22px] items-center text-[12px] leading-none text-[#111]">选择形状
          <div className="ml-[12px] flex h-[22px] w-[39px] items-center justify-between border border-[#b4b4b4] pl-[4px] pr-[3px]"><div className="h-[16px] w-[16px] border border-[#444] bg-white" /><Caret /></div>
        </div>
        <div className="ml-px mt-[15px] text-[12px] leading-[12px] text-[#111]">交互样式设置</div>
        <div className="ml-[4px] mt-[9px] flex h-[88px] flex-col justify-between">
          {([["鼠标悬停", <path d="M0 1h10v8H0z" fill="#d0d0d0" />], ["鼠标按下", <path d="M.7 1.500h9v7.500h-9z" stroke={BLUE} strokeWidth="1.300" />], ["选中", <path d="M0 1h10v9H0z" fill={BLUE} />], ["禁用", <path d="M.6 1.600h9v7.500h-9z" stroke="#666" strokeDasharray="1 1.200" />]] as [string, ReactNode][]).map(([n, d]) => (
            <div key={n} className="flex h-[13px] items-center gap-[5px]"><Cursor d={d} /><LinkText>{n}</LinkText></div>
          ))}
        </div>
        <div className="ml-px mt-[19px] flex h-[13px]"><LinkText>引用页面</LinkText></div>
        <Check className="ml-px mt-[15px]" name="禁用" />
        <Check className="ml-px mt-[16px]" name="选中" />
        <div className="ml-px mt-[16px] text-[12px] leading-[12px] text-[#222]">设置选项组名称:</div>
        <Field className="ml-px mt-[3px] justify-end bg-white"><Caret /></Field>
        <div className="ml-px mt-[15px] text-[12px] leading-[12px] text-[#222]">元件提示</div>
        <Field className="ml-px mt-[3px] bg-white" />
      </div>
      <ImeBar />
    </div>
  );
}

/* ---------- taskbar ---------- */
const Task = ({ icon, name, className, lit }: { icon: ReactNode; name: string; className: string; lit?: boolean }) => (
  <div className={`flex h-[39px] shrink-0 items-center gap-[4px] whitespace-nowrap rounded-[3px] border border-[#24384f] text-[12px] leading-none text-white shadow-[inset_0_0_0_1px_#c6d1dd99] ${lit ? "bg-[linear-gradient(165deg,#ccd7e2_0%,#aebccb_48%,#8fa0b4_52%,#b3c1cf_100%)]" : "bg-[linear-gradient(165deg,#b7c4d2_0%,#91a3b8_45%,#7b8fa7_50%,#8ea1b7_100%)]"} ${className}`}>
    {icon}<span className="tracking-[-0.05px] drop-shadow-[0_1px_1px_#0006]">{name}</span>
  </div>
);
const Folder = ({ pc }: { pc?: boolean }) => (
  <Svg w={27} h={32} className="mr-[5px]"><path d="M1 3l7-2v27l-5 3-2-3z" fill="#e3c766" /><path d="M5 3l12-1v7l3 1v17L8 31 5 28z" fill="#f7e499" stroke="#cda943" strokeWidth=".6" /><path d="M5 3l4 3v25l-4-3z" fill="#fdf2bd" />{pc && <><path d="M12 13l13 2-1 13-11-5z" fill="#2f7fe8" stroke="#1c3f80" /><path d="M10 25l13 5.500" stroke="#333" strokeWidth="2" /></>}</Svg>
);
const Diamond = ({ s }: { s: number }) => (
  <svg width={s} height={s} viewBox="0 0 32 32" className="block"><path d="M15 3h-3L1.500 14v3L11 28h4" fill="none" stroke="#857c88" strokeWidth="1.500" /><path d="M18.500 4h3l9.500 11v2l-9.500 11h-3L8 17v-2z" fill="#e0141e" /></svg>
);
const Netease = ({ s }: { s: number }) => (
  <svg width={s} height={s} viewBox="0 0 32 32" className="block"><rect width="32" height="32" rx="5" fill="#e8200e" /><path d="M20 6c-3 0-4 2-3.500 4l2 7c.5 4-5.500 4-5 0 .5-4 4.500-5 7.500-4 6 3 3 12-5 12-9 0-11-12-3-16" fill="none" stroke="#fff" strokeWidth="2.400" /></svg>
);

const tray: ReactNode[] = [
  <Svg w={14} h={16}><path d="M0 1c5 1 9 1 14 0v8c0 3-3 5-7 7-4-2-7-4-7-7z" fill="#e9bb45" /><path d="M4 3v9M7 3v11M10 3v9" stroke="#fff3c0" strokeWidth="1.400" /></Svg>,
  <Svg w={16} h={15}><path d="M1 0l14 7.500L1 15z" fill="#21b1ea" /><path d="M4 3l11 4.500L4 14z" fill="#7ccf32" /><path d="M6 5l5 3-5 3z" fill="#fff" /></Svg>,
  <Svg w={16} h={16}><rect width="16" height="16" rx="1" fill="#1696ef" /><path d="M2 2h3v3H2zM2 7h3v3H2zM2 12h3v2H2zM7 2h7v5H7zM7 9h7v5H7z" fill="#fff" /></Svg>,
  <Svg w={16} h={16}><rect width="16" height="16" rx="1" fill="#3aa0e8" /><circle cx="5" cy="9.500" r="2.600" stroke="#fff" strokeWidth="1.500" /><circle cx="11" cy="9.500" r="2.600" stroke="#fff" strokeWidth="1.500" /><circle cx="8" cy="5.500" r="2" stroke="#fff" strokeWidth="1.500" /></Svg>,
  <Svg w={14} h={15}><path d="M0 1h14c0 7-1 11-7 14C1 12 0 8 0 1z" fill="#e4e4e4" /><path d="M7 1h7c0 2 0 4-.5 6H7zM.5 7H7v8C3 13 1 10 .5 7z" fill="#8a8f96" /></Svg>,
  <Netease s={16} />,
  <Diamond s={17} />,
  <Svg w={15} h={15}><circle cx="7.500" cy="7.500" r="7" fill="#58b648" stroke="#cfe9c8" /><path d="M5.500 4v7M10 4L6 7.500 10 11" stroke="#fff" strokeWidth="1.700" /></Svg>,
  <Svg w={16} h={16}><rect width="16" height="16" rx="1" fill="#2a9645" /><path d="M5 13V4h7M5 8.500h3" stroke="#fff" strokeWidth="1.800" /><path d="M9 8l4 2.500L9 13z" fill="#b9ecc4" /></Svg>,
  <Svg w={16} h={16}><rect width="16" height="16" fill="#2b3326" /><path d="M1 8c3-5 8-5 11 0-3 4-8 4-11 0z" stroke="#76b900" strokeWidth="1.600" /><circle cx="6.500" cy="8" r="1.600" fill="#76b900" /><path d="M13 7h3v9h-3z" fill="#f7d611" /></Svg>,
  <Svg w={16} h={17}><path d="M1 2c4 0 5-1 6-2 2 1 4 2 7 2 0 7-1 11-7 14C2 13 1 9 1 2z" fill="#b9dfae" /><circle cx="10.500" cy="11.500" r="5" fill="#2fa336" /><path d="M8 11.500l2 2 3.500-4" stroke="#fff" strokeWidth="1.500" /></Svg>,
  <Svg w={16} h={16}><path d="M3 0h12l-3 3 3 4H6L1 3z" fill="#3fae2a" /><path d="M1 9h9l5 4-3 3H1l3-3z" fill="#1f8fd6" /></Svg>,
  <Svg w={16} h={16}><path d="M2 0v15" stroke="#fff" strokeWidth="1.600" /><path d="M3 1c4-2 4 2 10 0v7C8 10 7 6 3 8z" fill="#fff" /><circle cx="11" cy="11.500" r="4.500" fill="#cf2222" /><path d="M9 9.500l4 4M13 9.500l-4 4" stroke="#fff" strokeWidth="1.400" /></Svg>,
  <Svg w={16} h={13}><path d="M1.500 13v-2M4.500 13V9M7.500 13V7M10.500 13V4M13.500 13V1" stroke="#fff" strokeWidth="2" /></Svg>,
  <Svg w={16} h={14}><path d="M1 4.500h2.500L7 1v12L3.500 9.500H1z" fill="#fff" /><path d="M9 4.500c1 1.500 1 3.500 0 5M11 3c2 2.500 2 5.500 0 8M13 1.500c2.500 3 2.500 8 0 11" stroke="#fff" strokeWidth="1.100" /></Svg>,
  <Svg w={15} h={16}><path d="M6 3H1v12h7v-3" stroke="#fff" strokeWidth="1.500" /><path d="M3 1h3v2H3z" fill="#fff" /><path d="M6 6h8v3l-2 2H8L6 9z" fill="#fff" /><path d="M8 3v3M12 3v3M10 11v4" stroke="#fff" strokeWidth="1.300" /></Svg>,
];

function Taskbar() {
  return (
    <div className="relative flex h-[40px] items-center overflow-hidden border-t border-[#1c2b3d] bg-[linear-gradient(90deg,#6f87a2_0%,#8497ae_5%,#7289a6_25%,#6f87a5_60%,#8496ae_75.500%,#25496c_78%,#1b4263_87%,#234a70_100%)]">
      <div className="absolute -left-[10px] top-[14px] h-[40px] w-[115px] bg-[#123a59] blur-[7px]" />
      <div className="absolute inset-x-0 top-0 h-px bg-[#b6c3d1]/70" />
      <div className="relative ml-[9px] flex h-[36px] w-[36px] items-center justify-center rounded-full border border-[#7fa9c4] bg-[radial-gradient(circle_at_50%_90%,#3fb4e6_0%,#1d5d8f_45%,#23496f_70%,#7d9ab5_100%)]">
        <Svg w={24} h={24}><path d="M3 5c3-2 6-2 8 0l-1.500 7C7 10 4.500 10 1.500 12z" fill="#e8532a" /><path d="M12.500 5.500c3 2 6 2 9.500 0L20 12.500c-3 2-6 2-9 0z" fill="#86bf2f" /><path d="M1 13.500c3-2 6-2 8 0L7.500 21c-2.500-2-5-2-8 0z" fill="#3a8fe0" /><path d="M10.500 14.500c3 2 6 2 9 0L18 21.500c-3 2-6 2-9 0z" fill="#f8c321" /></Svg>
      </div>
      <Svg w={32} h={34} className="relative ml-[27px]"><path d="M25 21a9 9 0 01-17-3 9 9 0 0118-1H12" stroke="#56c5f0" strokeWidth="5.500" /><path d="M4 29C-1 24 8 8 20 3c7-3 10 0 7 6" stroke="#f3c22b" strokeWidth="2.500" /></Svg>
      <svg width="30" height="30" viewBox="0 0 30 30" className="relative ml-[30px] block shrink-0"><circle cx="15" cy="15" r="14.500" fill="#db4437" /><path d="M2.500 8L9 18.500l5.500 4L12 29.200A14.500 14.500 0 012.500 8z" fill="#0f9d58" /><path d="M15 8.500h13.200A14.500 14.500 0 0112.500 29.200l7.500-12z" fill="#ffcd40" /><circle cx="15" cy="15" r="6.800" fill="#fff" /><circle cx="15" cy="15" r="5.300" fill="#4285f4" /></svg>
      <Task className="ml-[17px] w-[142px] pl-[9px]" name="点击导航切换..." icon={<Svg w={32} h={32}><circle cx="16" cy="16" r="15.500" fill="#e2701c" /><path d="M5 21c1-8 7-15 15-17 5 3 9 8 8 13-2-3-5-3-6 0-1 5-3 8-8 9 2-4 1-7-2-7-2 0-4 3-7 2z" fill="#fdf3e6" /><circle cx="14" cy="15" r="1.200" fill="#a04a10" /></Svg>} />
      <div className="ml-[17px]"><Diamond s={32} /></div>
      <div className="ml-[28px] flex h-[32px] w-[32px] items-center justify-center border border-dashed border-[#e77] bg-[#b00d0d] text-[22px] font-bold italic leading-none tracking-[-2px] text-white"><span className="-mt-[4px]">F</span><span className="mt-[8px] text-[19px]">z</span></div>
      <div className="ml-[29px]"><Netease s={32} /></div>
      <Svg w={30} h={30} className="ml-[30px]"><path d="M0 0h30v30H0z" fill="#dd1414" /><path d="M3 10c9-2 9 9 22 9M26 11c-9-1-9 10-20 11" stroke="#fff" strokeWidth="4.500" /></Svg>
      <Svg w={30} h={30} className="ml-[29px]"><path d="M3 1.500h25v26H3z" fill="#fff" stroke="#e7a81a" strokeWidth="2" /><path d="M0 5l17-3v20L0 24z" fill="#f0b02a" /><ellipse cx="8.500" cy="12.500" rx="4.500" ry="5.500" stroke="#fff" strokeWidth="3" /><circle cx="23" cy="13" r="5" fill="#fff" stroke="#d9a02a" strokeWidth="1.500" /><path d="M23 10v3h2.500M6 27l10-8 12 8" stroke="#dcae4a" /></Svg>
      <Task className="ml-[17px] w-[142px] rounded-r-none border-r-0 pl-[8px]" name="Desktop" icon={<Folder pc />} />
      <Task className="w-[142px] rounded-l-none pl-[9px]" name="03AXure日记..." icon={<Folder />} />
      <Task className="ml-[3px] w-[142px] pl-[8px]" name="MINGW64:/g..." icon={<Svg w={32} h={32}><path d="M16 0l6 6-6 6-6-6z" fill="#f8837c" /><path d="M8.500 8l8 8-8 8-8-8z" fill="#8ab8f0" /><path d="M23.500 8l8 8-8 8-8-8z" fill="#86c55c" /><path d="M16 19l6.500 6.500L16 32l-6.500-6.500z" fill="#fbe06f" /><circle cx="22" cy="15" r="2" fill="#54728f" /><path d="M22 15l-5-7M22 15v6" stroke="#54728f" strokeWidth="1.500" /></Svg>} />
      <Task className="ml-[2px] w-[142px] pl-[8px]" name="Axure点击导..." icon={<Svg w={31} h={32} className="mr-px"><path d="M2 3l3-2h23v28H2z" fill="#e9f0fa" stroke="#2a5bb0" strokeWidth="1.600" /><path d="M4 7l4 15 5-13 5 13 4-15" stroke="#1e50aa" strokeWidth="3.500" /><path d="M17 20l13-2v12H19z" fill="#fff" stroke="#7c9dd0" /></Svg>} />
      <Task lit className="ml-[2px] w-[141px] pl-[8px]" name="Axure笔记之..." icon={<div className="flex h-[32px] w-[32px]"><div className="w-[6px] bg-[#8a0fa5]" /><div className="ml-[2px] flex flex-1 items-end justify-center bg-[linear-gradient(135deg,#c31be0_40%,#8a0fa5_60%)] text-[14px] leading-[15px]">RP</div></div>} />
      <div className="ml-[14px] w-[18px] pb-[4px] font-['Liberation_Mono',monospace] text-[11px] leading-none text-white">CH</div>
      <Svg w={16} h={16} className="mb-[4px] ml-[3px]"><path d="M0 0h16v16H0z" fill="#fdb90b" /><path d="M4.500 3v9.500L11 9.500 7 7.500" stroke="#222" strokeWidth="2" /></Svg>
      <div className="mb-[4px] ml-[7px] flex h-[15px] w-[15px] items-center justify-center rounded-full border border-[#dfe6f5] bg-[#1431a8] text-[12px] font-bold leading-none text-white">?</div>
      <Svg w={9} h={18} className="mb-[6px] ml-[10px]"><path d="M3 3V.6h5.400v4H6M.6 3H6v4H.6z" stroke="#fff" strokeWidth="1.100" /><path d="M2 14h5l-2.500 3z" fill="#fff" /></Svg>
      <div className="ml-[6px] flex pt-[1px]">
        {tray.map((t, i) => <div key={i} className="flex h-[18px] w-[24px] items-center justify-center">{t}</div>)}
      </div>
      <div className="ml-[12px] w-[58px] text-center font-['Noto_Sans',sans-serif] text-[12px] leading-[18px] text-white"><div>23:17</div><div>2018/4/5</div></div>
      <div className="ml-[8px] h-[39px] w-[13px] border border-[#7a93ad] bg-[linear-gradient(180deg,#6d88a5,#2b5077)]" />
    </div>
  );
}

export default function App() {
  return (
    <div className="flex h-[1080px] w-[1920px] flex-col overflow-hidden bg-[#d8d8d8] font-['Liberation_Sans','Noto_Sans_CJK_SC',sans-serif]">
      <TitleBar />
      <MenuBar />
      <Toolbar />
      <StyleBar />
      <div className="flex min-h-0 flex-1">
        <LeftPanels />
        <Canvas />
        <Inspector />
      </div>
      <Taskbar />
    </div>
  );
}
